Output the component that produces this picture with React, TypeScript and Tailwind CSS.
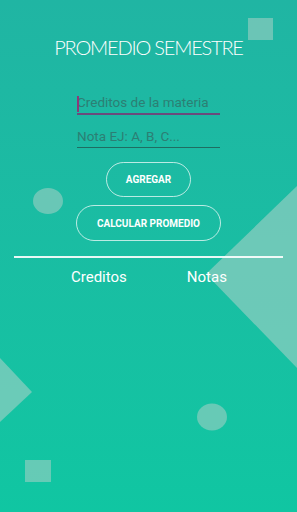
const App = () => {
    return (
        <div className="relative w-[297px] h-[512px] overflow-hidden bg-gradient-to-b from-[#20b5a3] to-[#10c6a2]" style={{ fontFamily: "Roboto, sans-serif" }}>
            {/* decorative shapes */}
            <svg className="absolute inset-0" width="297" height="512" viewBox="0 0 297 512">
                <rect x="248" y="18" width="25" height="22" fill="#9fcfc3" fillOpacity="0.6" />
                <ellipse cx="48" cy="201" rx="15" ry="13" fill="#9fcfc3" fillOpacity="0.6" />
                <polygon points="297,186 206,274 297,368" fill="#a5d0c6" fillOpacity="0.6" />
                <polygon points="0,358 32,392 0,422" fill="#a5d0c6" fillOpacity="0.6" />
                <ellipse cx="212" cy="417" rx="15" ry="13.5" fill="#9fcfc3" fillOpacity="0.6" />
                <rect x="25" y="460" width="26" height="22" fill="#9fcfc3" fillOpacity="0.6" />
            </svg>

            <div className="relative flex flex-col items-center">
                <h1 className="mt-[35px] text-white text-[20px] font-light tracking-[-1.2px] leading-[24px]" style={{ fontFamily: "Lato, sans-serif" }}>
                    PROMEDIO SEMESTRE
                </h1>

                <div className="mt-[34px] w-[143px] flex flex-col">
                    <div className="relative h-[22px] border-b-2 border-[#6b4a7c] flex items-center">
                        <span className="absolute left-0 top-[3px] w-[2px] h-[16px] bg-[#8a3a7a]" />
                        <span className="text-[13.5px] text-[#2c7f74] leading-none">Creditos de la materia</span>
                    </div>
                    <div className="mt-[12px] h-[21px] border-b border-[#1f6d62] flex items-center">
                        <span className="text-[13.5px] text-[#2c7f74] leading-none">Nota EJ: A, B, C...</span>
                    </div>
                </div>

                <button className="mt-[14px] w-[85px] h-[35px] rounded-full border border-white/70 text-white text-[10px] font-bold">
                    AGREGAR
                </button>
                <button className="mt-[8px] w-[145px] h-[36px] rounded-full border border-white/70 text-white text-[10px] font-bold">
                    CALCULAR PROMEDIO
                </button>

                <div className="mt-[15px] w-[269px] h-[2px] bg-white/90" />

                <div className="mt-[8px] w-full flex text-white text-[15px]">
                    <span className="ml-[71px]">Creditos</span>
                    <span className="ml-[60px]">Notas</span>
                </div>
            </div>
        </div>
    )
}

export default App
